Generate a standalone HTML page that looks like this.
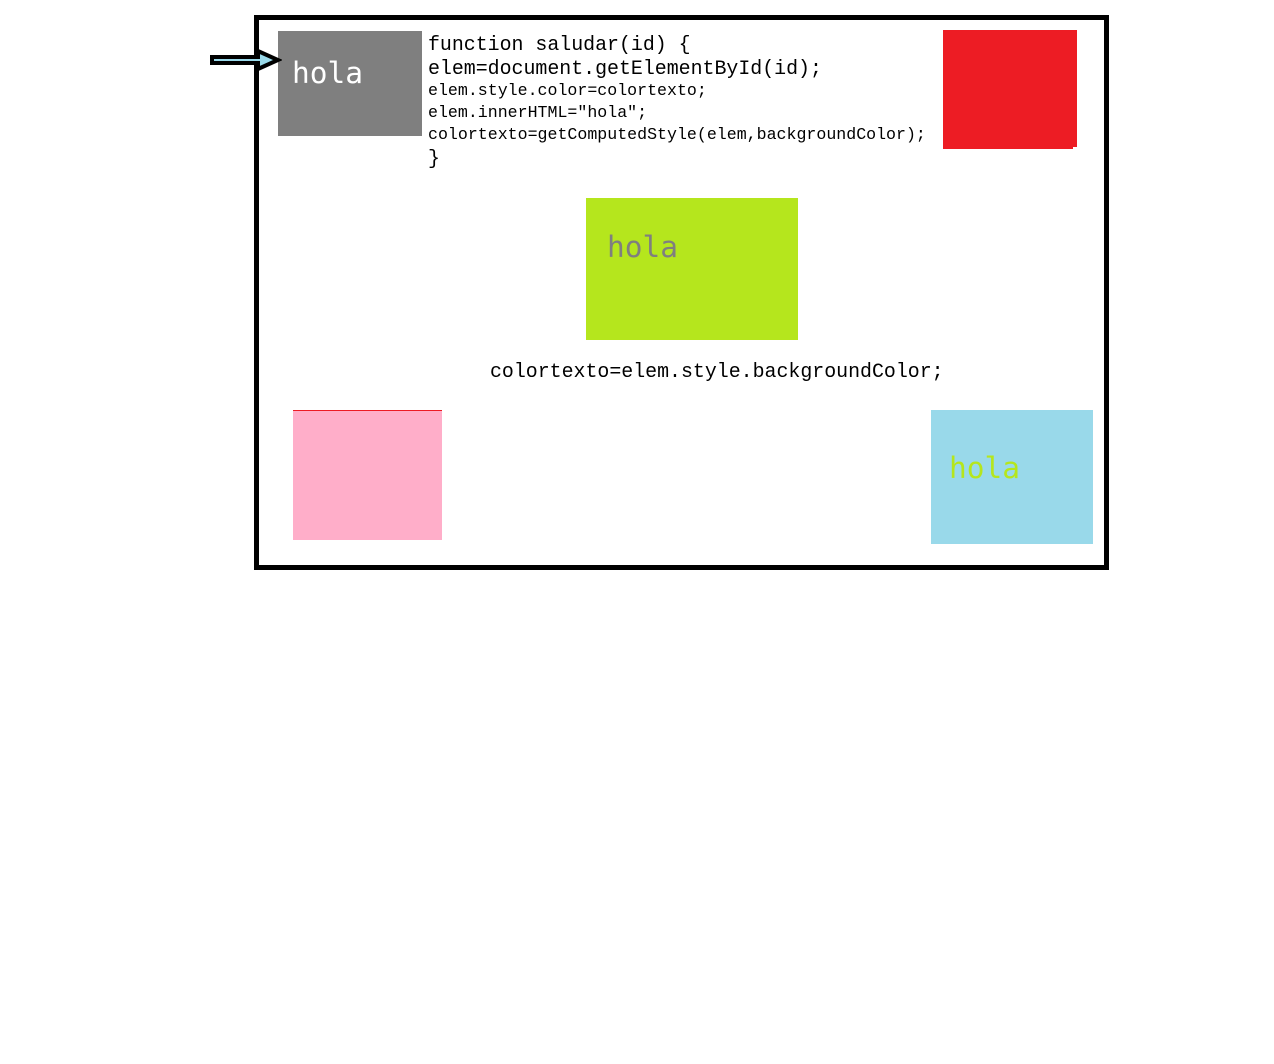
<!DOCTYPE html>
<html><head><meta charset="utf-8"><style>
html,body{margin:0;padding:0;background:#fff;width:1274px;height:1064px;overflow:hidden;position:relative}
div{position:absolute}
.m{font-family:"Liberation Mono","DejaVu Sans Mono",monospace;color:#000;white-space:pre;line-height:1}
.h{font-family:"DejaVu Sans Mono","Liberation Mono",monospace;font-size:29.5px;line-height:1;white-space:pre;letter-spacing:0px}
</style></head><body>
<div style="left:254px;top:15px;width:845px;height:545px;border:5px solid #000"></div>
<div style="left:278px;top:31px;width:144px;height:105px;background:#7f7f7f"></div>
<div class="h" style="left:292px;top:59px;color:#fff">hola</div>
<svg style="position:absolute;left:208px;top:48px" width="74" height="26">
<path d="M4 9 H50 V3 L70 12 L50 21 V15 H4 Z" fill="#99d9ea" stroke="#000" stroke-width="4" stroke-linejoin="miter"/>
</svg>
<div class="m" style="left:428px;top:35px;font-size:19.9px">function saludar(id) {</div>
<div class="m" style="left:428px;top:59px;font-size:19.9px">elem=document.getElementById(id);</div>
<div class="m" style="left:428px;top:83px;font-size:16.6px">elem.style.color=colortexto;</div>
<div class="m" style="left:428px;top:105px;font-size:16.6px">elem.innerHTML="hola";</div>
<div class="m" style="left:428px;top:127px;font-size:16.6px">colortexto=getComputedStyle(elem,backgroundColor);</div>
<div class="m" style="left:428px;top:149px;font-size:19.9px">}</div>
<div style="left:943px;top:30px;width:134px;height:117px;background:#ed1c24"></div>
<div style="left:943px;top:147px;width:130px;height:2px;background:#ed1c24"></div>
<div style="left:586px;top:198px;width:212px;height:142px;background:#b5e61d"></div>
<div class="h" style="left:607px;top:233px;color:#7f7f7f">hola</div>
<div class="m" style="left:490px;top:362px;font-size:19.9px">colortexto=elem.style.backgroundColor;</div>
<div style="left:293px;top:410px;width:149px;height:130px;background:#ffaec9;border-top:1px solid #ed1c24;box-sizing:border-box"></div>
<div style="left:931px;top:410px;width:162px;height:134px;background:#99d9ea"></div>
<div class="h" style="left:949px;top:454px;color:#b5e61d">hola</div>
</body></html>
